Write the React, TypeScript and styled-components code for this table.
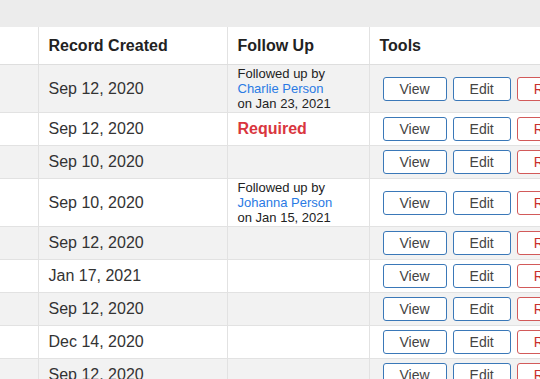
import React from 'react';
import styled, { createGlobalStyle } from 'styled-components';

const GlobalStyle = createGlobalStyle`
    html, body {
        margin: 0;
        padding: 0;
        background: #fff;
    }
    body {
        font-family: "Liberation Sans", Arial, sans-serif;
        color: #333;
    }
`

type FollowUp = { by: string; on: string } | 'required' | null;

const rows: { created: string; followUp: FollowUp }[] = [
    { created: 'Sep 12, 2020', followUp: { by: 'Charlie Person', on: 'Jan 23, 2021' } },
    { created: 'Sep 12, 2020', followUp: 'required' },
    { created: 'Sep 10, 2020', followUp: null },
    { created: 'Sep 10, 2020', followUp: { by: 'Johanna Person', on: 'Jan 15, 2021' } },
    { created: 'Sep 12, 2020', followUp: null },
    { created: 'Jan 17, 2021', followUp: null },
    { created: 'Sep 12, 2020', followUp: null },
    { created: 'Dec 14, 2020', followUp: null },
    { created: 'Sep 12, 2020', followUp: null },
];

const App = () => {
    return (
        <>
            <GlobalStyle />
            <Page>
                <TopBand />
                <Scroller>
                    <Table>
                        <colgroup>
                            <col style={{ width: 38 }} />
                            <col style={{ width: 189 }} />
                            <col style={{ width: 142 }} />
                            <col style={{ width: 260 }} />
                        </colgroup>
                        <thead>
                            <tr>
                                <Th></Th>
                                <Th>Record Created</Th>
                                <Th>Follow Up</Th>
                                <Th>Tools</Th>
                            </tr>
                        </thead>
                        <tbody>
                            {rows.map((row, index) => (
                                <Row key={index} $striped={index % 2 === 0}>
                                    <Td></Td>
                                    <Td>{row.created}</Td>
                                    <FollowCell>
                                        {row.followUp === 'required' && <Required>Required</Required>}
                                        {row.followUp && row.followUp !== 'required' && (
                                            <FollowNote>
                                                <div>Followed up by</div>
                                                <PersonLink href="#">{row.followUp.by}</PersonLink>
                                                <div>on {row.followUp.on}</div>
                                            </FollowNote>
                                        )}
                                    </FollowCell>
                                    <Td>
                                        <Tools>
                                            <ToolButton $variant="primary">View</ToolButton>
                                            <ToolButton $variant="primary">Edit</ToolButton>
                                            <ToolButton $variant="danger">Remove</ToolButton>
                                        </Tools>
                                    </Td>
                                </Row>
                            ))}
                        </tbody>
                    </Table>
                </Scroller>
            </Page>
        </>
    );
};

const Page = styled.div`
    width: 540px;
    height: 379px;
    overflow: hidden;
    background: #fff;
`

const TopBand = styled.div`
    height: 27px;
    background: #ececec;
`

const Scroller = styled.div`
    width: 540px;
    overflow: hidden;
`

const Table = styled.table`
    border-collapse: collapse;
    table-layout: fixed;
    width: 629px;
    font-size: 16px;
    line-height: 24px;
`

const Th = styled.th`
    text-align: left;
    font-weight: bold;
    color: #222;
    padding: 7px 10px 6px;
    border-right: 1px solid #e2e2e2;
    border-bottom: 1px solid #dedede;
    white-space: nowrap;
`

const Row = styled.tr<{ $striped: boolean }>`
    background: ${p => (p.$striped ? '#f2f2f2' : '#fff')};
`

const Td = styled.td`
    padding: 4px 10px;
    border-right: 1px solid #e2e2e2;
    border-bottom: 1px solid #e2e2e2;
    vertical-align: middle;
    white-space: nowrap;
    color: #333;
`

const FollowCell = styled(Td)`
    padding: 1px 10px;
`

const FollowNote = styled.div`
    font-size: 13px;
    line-height: 15px;
    color: #222;
`

const PersonLink = styled.a`
    display: block;
    color: #2a7ae4;
    text-decoration: none;
`

const Required = styled.span`
    display: block;
    padding: 3px 0;
    font-weight: bold;
    font-size: 16px;
    color: #d9363e;
`

const Tools = styled.div`
    display: flex;
    gap: 6px;
    padding-left: 3px;
`

const ToolButton = styled.button<{ $variant: 'primary' | 'danger' }>`
    height: 24px;
    padding: 0 16px;
    font-family: "Liberation Sans", Arial, sans-serif;
    font-size: 14px;
    line-height: 22px;
    color: ${p => (p.$variant === 'danger' ? '#c9302c' : '#444')};
    background: #fff;
    border: 1px solid ${p => (p.$variant === 'danger' ? '#d25a5a' : '#3a78b8')};
    border-radius: 3px;
    cursor: pointer;
`

export default App;
